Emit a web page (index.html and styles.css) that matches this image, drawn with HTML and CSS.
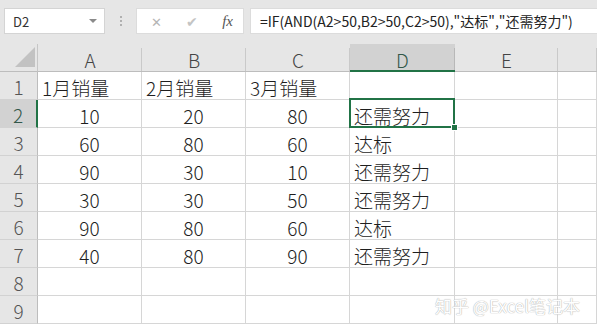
FILE: index.html
```html
<!DOCTYPE html>
<html lang="zh-CN">
	<head>
		<meta charset="UTF-8" />
		<title>Excel</title>
		<link rel="stylesheet" href="styles.css">
	</head>
	<body>
		<div class="toolbar">
			<div class="namebox">
				<span>D2</span>
				<span class="arrow"></span>
			</div>
			<div class="dots"><i></i><i></i><i></i></div>
			<div class="fxbtns">
				<span class="btn cancel">&#x2715;</span>
				<span class="btn ok">&#x2714;</span>
				<span class="btn fx">fx</span>
			</div>
			<div class="formula">=IF(AND(A2&gt;50,B2&gt;50,C2&gt;50),"达标","还需努力")</div>
		</div>

		<div class="sheet">
			<div class="corner"><span class="tri"></span></div>
			<div class="colhead">A</div>
			<div class="colhead">B</div>
			<div class="colhead">C</div>
			<div class="colhead sel">D</div>
			<div class="colhead">E</div>
			<div class="colhead"></div>

			<div class="rowhead">1</div>
			<div class="cell left">1月销量</div>
			<div class="cell left">2月销量</div>
			<div class="cell left">3月销量</div>
			<div class="cell"></div>
			<div class="cell"></div>
			<div class="cell"></div>

			<div class="rowhead sel">2</div>
			<div class="cell num">10</div>
			<div class="cell num">20</div>
			<div class="cell num">80</div>
			<div class="cell left active">还需努力</div>
			<div class="cell"></div>
			<div class="cell"></div>

			<div class="rowhead">3</div>
			<div class="cell num">60</div>
			<div class="cell num">80</div>
			<div class="cell num">60</div>
			<div class="cell left">达标</div>
			<div class="cell"></div>
			<div class="cell"></div>

			<div class="rowhead">4</div>
			<div class="cell num">90</div>
			<div class="cell num">30</div>
			<div class="cell num">10</div>
			<div class="cell left">还需努力</div>
			<div class="cell"></div>
			<div class="cell"></div>

			<div class="rowhead">5</div>
			<div class="cell num">30</div>
			<div class="cell num">30</div>
			<div class="cell num">50</div>
			<div class="cell left">还需努力</div>
			<div class="cell"></div>
			<div class="cell"></div>

			<div class="rowhead">6</div>
			<div class="cell num">90</div>
			<div class="cell num">80</div>
			<div class="cell num">60</div>
			<div class="cell left">达标</div>
			<div class="cell"></div>
			<div class="cell"></div>

			<div class="rowhead">7</div>
			<div class="cell num">40</div>
			<div class="cell num">80</div>
			<div class="cell num">90</div>
			<div class="cell left">还需努力</div>
			<div class="cell"></div>
			<div class="cell"></div>

			<div class="rowhead">8</div>
			<div class="cell"></div>
			<div class="cell"></div>
			<div class="cell"></div>
			<div class="cell"></div>
			<div class="cell"></div>
			<div class="cell"></div>

			<div class="rowhead">9</div>
			<div class="cell"></div>
			<div class="cell"></div>
			<div class="cell"></div>
			<div class="cell"></div>
			<div class="cell"></div>
			<div class="cell"></div>

			<div class="watermark">知乎 @Excel笔记本</div>
		</div>
	</body>
</html>
```

FILE: styles.css
```css
body {
	margin: 0;
	font-family: "Noto Sans CJK SC", "Noto Sans", sans-serif;
	font-weight: 300;
	color: #222;
	background: #fff;
	overflow: hidden;
}

.toolbar {
	display: flex;
	align-items: flex-start;
	height: 44px;
	padding: 8px 0 0 4px;
	box-sizing: border-box;
	background: #e6e6e6;
}

.namebox {
	display: flex;
	align-items: center;
	justify-content: space-between;
	width: 101px;
	height: 26px;
	padding: 0 7px 0 8px;
	box-sizing: border-box;
	background: #fff;
	border: 1px solid #d4d4d4;
	font-size: 13px;
	font-weight: 400;
	color: #333;
}

.arrow {
	width: 0;
	height: 0;
	border-left: 4px solid transparent;
	border-right: 4px solid transparent;
	border-top: 4px solid #8a8a8a;
}

.dots {
	display: flex;
	flex-direction: column;
	align-items: center;
	gap: 2px;
	width: 31px;
	padding-top: 8px;
}

.dots i {
	width: 2px;
	height: 2px;
	background: #b0b0b0;
}

.fxbtns {
	display: flex;
	align-items: center;
	justify-content: space-between;
	width: 108px;
	height: 26px;
	padding: 0 10px 0 14px;
	box-sizing: border-box;
	background: #fff;
	border: 1px solid #dcdcdc;
	margin-right: 6px;
}

.btn {
	color: #b5b5b5;
	font-size: 13px;
}

.btn.ok {
	font-size: 14px;
	color: #c4c4c4;
}

.btn.fx {
	font-family: "Liberation Serif", serif;
	font-style: italic;
	font-size: 15px;
	color: #555;
}

.formula {
	flex: 1;
	height: 26px;
	line-height: 25px;
	padding-left: 9px;
	box-sizing: border-box;
	background: #fff;
	border: 1px solid #dcdcdc;
	border-right: none;
	font-size: 14px;
	font-weight: 400;
	color: #222;
	white-space: nowrap;
}

.sheet {
	position: relative;
	display: grid;
	grid-template-columns: 38px 104px 104px 104px 105px 103px 1fr;
	grid-auto-rows: 28px;
}

.corner,
.colhead,
.rowhead {
	background: #e6e6e6;
	color: #444;
	box-sizing: border-box;
}

.corner {
	display: flex;
	justify-content: flex-end;
	align-items: flex-end;
	padding: 0 2px 4px 0;
	border-right: 1px solid #c6c6c6;
	border-bottom: 1px solid #bdbdbd;
}

.tri {
	width: 20px;
	height: 20px;
	background: #c2c2c2;
	clip-path: polygon(100% 0, 100% 100%, 0 100%);
}

.colhead {
	display: flex;
	align-items: center;
	justify-content: center;
	padding-top: 4px;
	font-size: 19px;
	background: linear-gradient(#c9c9c9, #c9c9c9) right 4px / 1px calc(100% - 4px) no-repeat, #e6e6e6;
	border-bottom: 1px solid #bdbdbd;
}

.colhead.sel {
	background: linear-gradient(#b8b8b8, #b8b8b8) right 4px / 1px calc(100% - 4px) no-repeat, #d2d2d2;
	border-bottom: 2px solid #217346;
	color: #33584a;
}

.rowhead {
	display: flex;
	align-items: center;
	justify-content: center;
	padding-top: 2px;
	font-size: 19px;
	border-right: 1px solid #bdbdbd;
	border-bottom: 1px solid #d2d2d2;
	color: #555;
}

.rowhead.sel {
	background: #d2d2d2;
	border-right: 2px solid #217346;
	color: #33584a;
}

.cell {
	display: flex;
	align-items: center;
	padding-top: 3px;
	box-sizing: border-box;
	border-right: 1px solid #d6d6d6;
	border-bottom: 1px solid #d6d6d6;
	font-size: 19px;
	white-space: nowrap;
	color: #1e1e1e;
}

.cell.left {
	padding-left: 4px;
}

.cell.num {
	justify-content: center;
}

.cell.active {
	position: relative;
}

.cell.active::after {
	content: "";
	position: absolute;
	top: -2px;
	left: -1px;
	right: -1px;
	bottom: -1px;
	border: 2px solid #217346;
}

.cell.active::before {
	content: "";
	position: absolute;
	right: -4px;
	bottom: -4px;
	width: 5px;
	height: 5px;
	background: #217346;
	border: 1px solid #fff;
	z-index: 1;
}

.watermark {
	position: absolute;
	right: 17px;
	bottom: 6px;
	font-size: 17px;
	font-weight: 400;
	color: #fff;
	text-shadow: 0 0 1px #b4b4b4, 0 0 1px #b4b4b4;
	white-space: nowrap;
}
```
